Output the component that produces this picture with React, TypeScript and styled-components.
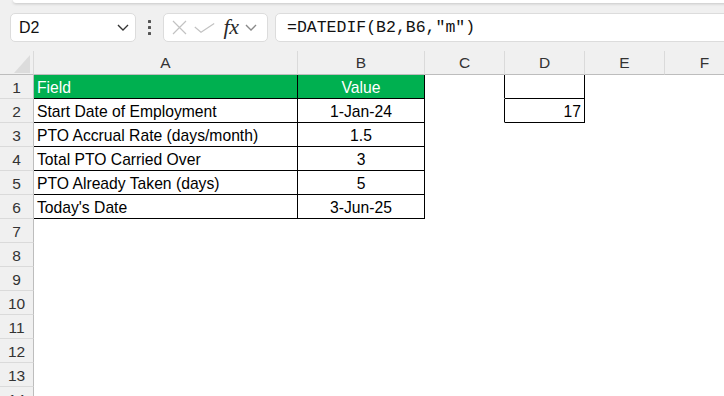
import React from "react";
import styled, { createGlobalStyle } from "styled-components";

const Global = createGlobalStyle`
  html, body { margin: 0; padding: 0; background: #f0f0f0; overflow: hidden; }
  #root { width: 724px; height: 396px; overflow: hidden; }
`;

const Page = styled.div`
  width: 724px;
  height: 396px;
  background: #f0f0f0;
  display: flex;
  flex-direction: column;
  overflow: hidden;
  font-family: "Liberation Sans", Arial, sans-serif;
  & > * { flex-shrink: 0; }
`;

const TopPanel = styled.div`
  height: 3px;
  margin-left: 13px;
  margin-right: -10px;
  background: #ffffff;
  border-radius: 0 0 0 6px;
  box-shadow: 0 1px 3px rgba(0, 0, 0, 0.18);
`;

const FormulaBar = styled.div`
  display: flex;
  align-items: center;
  height: 29px;
  margin-top: 10px;
  padding-left: 10px;
`;

const Box = styled.div`
  height: 29px;
  box-sizing: border-box;
  background: #ffffff;
  border: 1px solid #dcdcdc;
  border-radius: 5px;
  display: flex;
  align-items: center;
`;

const NameBox = styled(Box)`
  width: 126px;
  padding: 0 6px 0 8px;
  justify-content: space-between;
  font-size: 16px;
  color: #111;
`;

const Dots = styled.div`
  width: 27px;
  display: flex;
  flex-direction: column;
  align-items: center;
  gap: 3px;
  & > span {
    width: 3px;
    height: 3px;
    background: #555;
    border-radius: 0.5px;
  }
`;

const ButtonGroup = styled(Box)`
  width: 105px;
  padding: 0 2px 0 5px;
`;

const IconSlot = styled.div<{ $w: number }>`
  width: ${(p) => p.$w}px;
  display: flex;
  align-items: center;
  justify-content: center;
`;

const Fx = styled.span`
  font-family: "Liberation Serif", "Times New Roman", serif;
  font-style: italic;
  font-size: 22px;
  color: #2a2a2a;
  letter-spacing: -0.5px;
  line-height: 1;
  margin-top: -2px;
`;

const FormulaInput = styled(Box)`
  flex: 1;
  margin-left: 7px;
  margin-right: -12px;
  padding-left: 11px;
  font-family: "Liberation Mono", "Courier New", monospace;
  font-size: 16.5px;
  color: #111;
`;

const Grid = styled.div`
  margin-top: 9px;
  display: grid;
  grid-template-columns: 34px 264px 127px 80px 80px 80px 80px;
  grid-auto-rows: 24px;
`;

const Corner = styled.div`
  box-sizing: border-box;
  border-right: 1px solid #dadada;
  border-bottom: 1px solid #bdbdbd;
  display: flex;
  align-items: flex-end;
  justify-content: flex-end;
  padding: 0 3px 1px 0;
  & > div {
    width: 0;
    height: 0;
    border-left: 16px solid transparent;
    border-bottom: 18px solid #dcdcdc;
  }
`;

const ColHead = styled.div`
  box-sizing: border-box;
  border-right: 1px solid #dadada;
  border-bottom: 1px solid #bdbdbd;
  display: flex;
  align-items: center;
  justify-content: center;
  font-size: 15.5px;
  color: #333;
  padding-top: 1px;
`;

const RowHead = styled.div`
  box-sizing: border-box;
  border-right: 1px solid #bdbdbd;
  border-bottom: 1px solid #dadada;
  display: flex;
  align-items: center;
  justify-content: center;
  font-size: 15.5px;
  color: #333;
  padding-top: 2px;
`;

type Align = "left" | "center" | "right";

const Cell = styled.div<{ $align?: Align; $right?: boolean; $bottom?: boolean; $head?: boolean }>`
  box-sizing: border-box;
  background: ${(p) => (p.$head ? "#00b050" : "#ffffff")};
  color: ${(p) => (p.$head ? "#ffffff" : "#000000")};
  border-right: 1px solid ${(p) => (p.$right ? "#000" : "transparent")};
  border-bottom: 1px solid ${(p) => (p.$bottom ? "#000" : "transparent")};
  font-size: 15.7px;
  line-height: 23px;
  padding: 1px 3px 0 3px;
  text-align: ${(p) => p.$align || "left"};
  white-space: nowrap;
  overflow: hidden;
`;

const Chevron = ({ size, color }: { size: number; color: string }) => (
  <svg width={size} height={size * 0.6} viewBox="0 0 10 6">
    <path d="M0.8 0.8 L5 5 L9.2 0.8" fill="none" stroke={color} strokeWidth="1.1" />
  </svg>
);

const cols = ["A", "B", "C", "D", "E", "F"];

const rows: [string, string][] = [
  ["Field", "Value"],
  ["Start Date of Employment", "1-Jan-24"],
  ["PTO Accrual Rate (days/month)", "1.5"],
  ["Total PTO Carried Over", "3"],
  ["PTO Already Taken (days)", "5"],
  ["Today's Date", "3-Jun-25"],
];

export default function App() {
  const rowEls: React.ReactNode[] = [];
  for (let r = 1; r <= 14; r++) {
    const data = rows[r - 1];
    const inTable = !!data;
    const inD = r <= 2;
    rowEls.push(
      <React.Fragment key={r}>
        <RowHead>{r}</RowHead>
        <Cell $right={inTable} $bottom={inTable} $head={r === 1}>
          {data ? data[0] : ""}
        </Cell>
        <Cell $right={inTable} $bottom={inTable} $head={r === 1} $align="center">
          {data ? data[1] : ""}
        </Cell>
        <Cell $right={inD} />
        <Cell $right={inD} $bottom={inD} $align="right">
          {r === 2 ? "17" : ""}
        </Cell>
        <Cell />
        <Cell />
      </React.Fragment>
    );
  }

  return (
    <Page>
      <Global />
      <TopPanel />
      <FormulaBar>
        <NameBox>
          <span>D2</span>
          <Chevron size={12} color="#333" />
        </NameBox>
        <Dots>
          <span />
          <span />
          <span />
        </Dots>
        <ButtonGroup>
          <IconSlot $w={20}>
            <svg width="15" height="15" viewBox="0 0 15 15">
              <path d="M1 1 L14 14 M14 1 L1 14" stroke="#c2c2c2" strokeWidth="1.2" fill="none" />
            </svg>
          </IconSlot>
          <IconSlot $w={30}>
            <svg width="21" height="10" viewBox="0 0 21 10">
              <path d="M0.8 4 L7 9.2 L20.2 0.6" stroke="#c2c2c2" strokeWidth="1.2" fill="none" />
            </svg>
          </IconSlot>
          <IconSlot $w={24}>
            <Fx>fx</Fx>
          </IconSlot>
          <IconSlot $w={16}>
            <Chevron size={12} color="#8a8a8a" />
          </IconSlot>
        </ButtonGroup>
        <FormulaInput>=DATEDIF(B2,B6,"m")</FormulaInput>
      </FormulaBar>
      <Grid>
        <Corner>
          <div />
        </Corner>
        {cols.map((c) => (
          <ColHead key={c}>{c}</ColHead>
        ))}
        {rowEls}
      </Grid>
    </Page>
  );
}
